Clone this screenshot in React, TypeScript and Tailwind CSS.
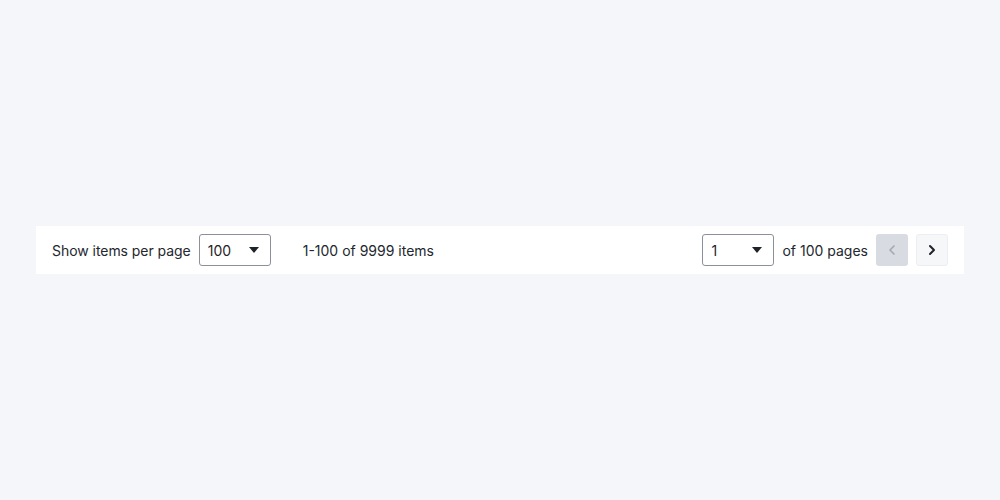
import { ChevronLeft, ChevronRight } from 'lucide-react';

function Caret() {
  return (
    <svg width="10" height="6" viewBox="0 0 10 6" className="text-[#1f2328]">
      <path d="M0 0h10L5 6z" fill="currentColor" />
    </svg>
  );
}

function Select({ value }: { value: string }) {
  return (
    <div className="flex items-center justify-between w-[72px] h-8 pl-2 pr-[11px] border border-[#8c9099] rounded-[3px] bg-white text-[14px] text-[#1f2328]">
      <span>{value}</span>
      <Caret />
    </div>
  );
}

export default function App() {
  return (
    <div
      className="w-[1000px] h-[500px] bg-[#f5f6fa] flex items-center px-9"
      style={{ fontFamily: 'Inter, "Liberation Sans", sans-serif' }}
    >
      <div className="flex items-center w-full h-12 bg-white px-4 text-[14px] text-[#23272e]">
        <span className="tracking-[-0.05px]">Show items per page</span>
        <div className="ml-2">
          <Select value="100" />
        </div>
        <span className="ml-8">1-100 of 9999 items</span>
        <div className="ml-auto flex items-center gap-2">
          <Select value="1" />
          <span>of 100 pages</span>
          <button className="w-8 h-8 flex items-center justify-center rounded-[3px] bg-[#d8dce2] text-[#a4a9b1]">
            <ChevronLeft size={16} strokeWidth={2.5} />
          </button>
          <button className="w-8 h-8 flex items-center justify-center rounded-[3px] bg-[#f6f7f9] border border-[#eceef2] text-[#1f2328]">
            <ChevronRight size={16} strokeWidth={3} />
          </button>
        </div>
      </div>
    </div>
  );
}
